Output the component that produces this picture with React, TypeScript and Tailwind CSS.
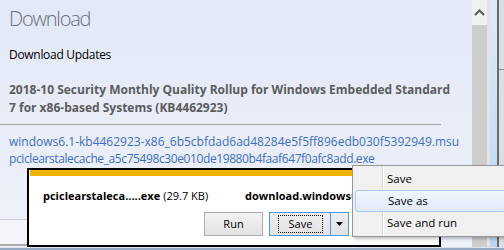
import React from "react";

function ChevronUp() {
  return (
    <svg width="11" height="7" viewBox="0 0 11 7" className="block">
      <path d="M1 6 L5.5 1.5 L10 6" fill="none" stroke="#5a5a5a" strokeWidth="2" />
    </svg>
  );
}

function DownTri() {
  return (
    <svg width="8" height="5" viewBox="0 0 8 5" className="block">
      <path d="M0 0 H7 L3.5 4 Z" fill="#000" />
    </svg>
  );
}

export default function App() {
  return (
    <div className="relative w-[504px] h-[250px] overflow-hidden bg-[#f0f0f0] font-['Open_Sans','Noto_Sans',sans-serif] text-[12px] text-black">
      <div className="flex h-[250px]">
        {/* page content */}
        <div className="w-[472px] h-full bg-gradient-to-b from-[#e2e8f6] to-[#eff2fa]">
          <div className="px-[9px]">
            <div className="pt-[5px] text-[20px] leading-[27px] font-light tracking-[-1.2px] text-[#6b6f78]">Download</div>
            <div className="mt-[15px] leading-[16px] tracking-[-0.3px]">Download Updates</div>
            <div className="mt-[18px] whitespace-nowrap font-bold text-[12px] text-[#5c5c5c] leading-[18px]">
              2018-10 Security Monthly Quality Rollup for Windows Embedded Standard
              <br />7 for x86-based Systems (KB4462923)
            </div>
          </div>
          <div className="mt-[7px] w-[441px] border-b border-[#a3a3a3]" />
          <div className="px-[9px] pt-[9px] text-[#3f6ec2] leading-[16.5px] whitespace-nowrap">
            <div>windows6.1-kb4462923-x86_6b5cbfdad6ad48284e5f5ff896edb030f5392949.msu</div>
            <div className="tracking-[-0.4px]">pciclearstalecache_a5c75498c30e010de19880b4faaf647f0afc8add.exe</div>
          </div>
        </div>
        {/* scrollbar */}
        <div className="w-[15px] h-full flex flex-col">
          <div className="h-[25px] bg-[#f0f0f0] flex items-center justify-center">
            <ChevronUp />
          </div>
          <div className="flex-1 bg-[#cdcdcd]" />
        </div>
        {/* right window edge */}
        <div className="w-[3px] h-full bg-[#e4e4e4]" />
        <div className="w-[7px] h-full bg-gradient-to-b from-[#dcebfa] to-[#b9d5f3]" />
        <div className="w-[2px] h-full bg-[#6b6b6b]" />
        <div className="w-[5px] h-full flex flex-col bg-[#dedede]">
          <div className="h-[70px] border-b border-[#8a8a8a]" />
        </div>
      </div>

      {/* status strip left of download bar */}
      <div className="absolute left-0 top-[219px] w-[27px] h-[27px] bg-[#f3f5fa] border-t border-[#c9ccd2] border-b-2 border-b-[#a9a9a9]" />

      {/* bottom edge */}
      <div className="absolute left-0 bottom-0 w-full h-[3px] bg-[#93a9c4] border-t border-[#dde2ea]" />

      {/* download notification bar */}
      <div className="absolute left-[27px] top-[168px] w-[414px] h-[79px] bg-white border-2 border-black p-[1px] pt-0 text-[11px]">
        <div className="h-[6px] bg-[#f0b400]" />
        <div className="mt-[12px] pl-[13px] leading-[16px] whitespace-nowrap flex">
          <div className="w-[202px] flex">
            <span className="font-bold">pciclearstaleca.....exe</span>
            <span className="ml-[3px]">(29.7 KB)</span>
          </div>
          <div className="font-bold">download.windowsu</div>
        </div>
        <div className="mt-[8px] ml-[174px] flex">
          <div className="w-[59px] h-[24px] border border-[#adadad] bg-gradient-to-b from-[#f2f2f2] to-[#e3e3e3] flex items-center justify-center">
            Run
          </div>
          <div className="ml-[6px] w-[80px] h-[24px] border border-[#4a9be6] bg-gradient-to-b from-[#eeeeee] to-[#e2e2e2] flex">
            <div className="w-[60px] h-full p-[2px] pl-[8px] pr-[7px]">
              <div className="w-full h-full border border-dotted border-black flex items-center justify-center">Save</div>
            </div>
            <div className="w-[1px] h-full bg-[#4a9be6]" />
            <div className="flex-1 flex items-center justify-center">
              <DownTri />
            </div>
          </div>
        </div>
      </div>

      {/* context menu */}
      <div className="absolute left-[352px] top-[165px] w-[170px] h-[72px] bg-[#f0f0f0] border border-[#979797] shadow-[2px_2px_3px_rgba(0,0,0,0.25)] text-[11.5px]">
        <div className="absolute left-[29px] top-0 bottom-0 w-[1px] bg-[#d9d9d9]" />
        <div className="absolute left-[30px] top-0 bottom-0 w-[1px] bg-white" />
        <div className="relative pt-[2px] flex flex-col">
          <div className="h-[22px] pl-[34px] flex items-center">Save</div>
          <div className="h-[22px] ml-[2px] pl-[32px] flex items-center rounded-[3px] border border-[#a9cbf1] bg-gradient-to-b from-[#f1f6fd] to-[#e1eaf8]">Save as</div>
          <div className="h-[22px] pl-[34px] flex items-center">Save and run</div>
        </div>
      </div>
    </div>
  );
}
